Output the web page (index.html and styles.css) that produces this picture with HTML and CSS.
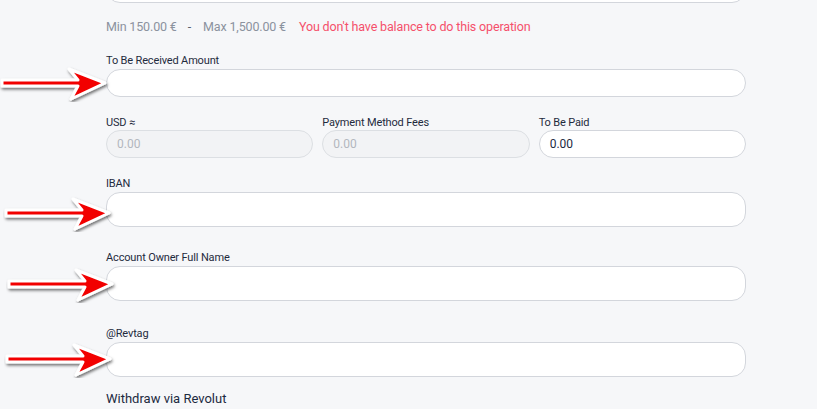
FILE: index.html
```html
<!DOCTYPE html>
<html>
<head>
<meta charset="utf-8">
<link rel="stylesheet" href="styles.css">
</head>
<body>
<svg width="0" height="0" style="position:absolute">
  <defs>
    <filter id="sh" x="-20%" y="-40%" width="140%" height="200%">
      <feDropShadow dx="1" dy="2" stdDeviation="1.6" flood-color="#000" flood-opacity="0.55"/>
    </filter>
    <symbol id="arrow" viewBox="0 0 112 36">
      <polygon filter="url(#sh)" points="3,14 79,14 70,3 106,17 72,33 79,20 3,20" fill="#f20000" stroke="#fff" stroke-width="3" stroke-linejoin="round"/>
    </symbol>
  </defs>
</svg>
<main class="form">
  <div class="box top-box"></div>
  <p class="limits"><span class="muted">Min 150.00 €</span><span class="muted dash">-</span><span class="muted">Max 1,500.00 €</span><span class="error">You don't have balance to do this operation</span></p>

  <div class="field f-received">
    <label class="label">To Be Received Amount</label>
    <div class="input-wrap">
      <svg class="arrow a1"><use href="#arrow"/></svg>
      <div class="box input small"></div>
    </div>
  </div>

  <div class="row">
    <div class="col">
      <label class="label">USD ≈</label>
      <div class="box input small disabled"><span class="ph">0.00</span></div>
    </div>
    <div class="col">
      <label class="label">Payment Method Fees</label>
      <div class="box input small disabled"><span class="ph">0.00</span></div>
    </div>
    <div class="col">
      <label class="label">To Be Paid</label>
      <div class="box input small"><span class="val">0.00</span></div>
    </div>
  </div>

  <div class="field f-iban">
    <label class="label">IBAN</label>
    <div class="input-wrap">
      <svg class="arrow a2"><use href="#arrow"/></svg>
      <div class="box input"></div>
    </div>
  </div>

  <div class="field f-owner">
    <label class="label">Account Owner Full Name</label>
    <div class="input-wrap">
      <svg class="arrow a3"><use href="#arrow"/></svg>
      <div class="box input"></div>
    </div>
  </div>

  <div class="field f-revtag">
    <label class="label">@Revtag</label>
    <div class="input-wrap">
      <svg class="arrow a4"><use href="#arrow"/></svg>
      <div class="box input"></div>
    </div>
  </div>

  <p class="title">Withdraw via Revolut</p>
</main>
</body>
</html>
```

FILE: styles.css
```css
* { box-sizing: border-box; }
html, body { margin: 0; padding: 0; }
body {
  background: #f6f7f9;
  font-family: Roboto, "Noto Sans", sans-serif;
  color: #1c2a3f;
  overflow: hidden;
  height: 409px;
}
.form {
  width: 746px;
  padding-left: 106px;
}
.box {
  background: #fff;
  border: 1px solid #d3d6dc;
  border-radius: 14px;
}
.top-box {
  height: 34px;
  margin-top: -31px;
}
.limits {
  margin: 16px 0 0;
  font-size: 12.5px;
  line-height: 16px;
  letter-spacing: -0.15px;
  display: flex;
}
.muted { color: #8b929e; }
.dash { margin: 0 12px 0 11px; color: #5a6270; }
.error { color: #f5506b; margin-left: 13px; }

.label {
  display: block;
  font-size: 11px;
  line-height: 14px;
  letter-spacing: -0.15px;
  color: #1f2b3d;
  padding-top: 2px;
  margin-bottom: 1px;
}
.f-received { margin-top: 17px; }
.f-iban { margin-top: 17px; }
.f-owner { margin-top: 22px; }
.f-revtag { margin-top: 24px; }
.input-wrap { position: relative; }
.input {
  height: 35px;
  display: flex;
  align-items: center;
  padding-left: 10px;
  font-size: 12px;
}
.input.small { height: 28px; }
.input.disabled { background: #f2f3f5; border-color: #dcdfe3; }
.ph { color: #b3b7be; }
.val { color: #1c2a3f; }

.row {
  display: grid;
  grid-template-columns: 1fr 1fr 1fr;
  column-gap: 9px;
  margin-top: 17px;
}
.row .label { margin-bottom: 0; }

.arrow {
  position: absolute;
  width: 112px;
  height: 36px;
  top: 50%;
  margin-top: -18px;
}
.a1 { left: -107px; margin-top: -17px; }
.a2 { left: -103px; margin-top: -14px; }
.a3 { left: -100px; margin-top: -17px; }
.a4 { left: -102px; margin-top: -18px; }

.title {
  margin: 14px 0 0;
  font-size: 13px;
  line-height: 16px;
  color: #1c2a3f;
}
```
